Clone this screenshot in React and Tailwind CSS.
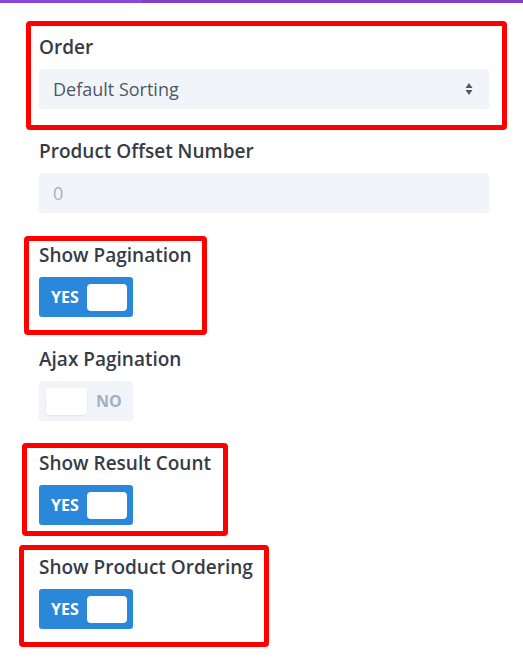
import React from 'react'

const font = { fontFamily: '"Open Sans", "Noto Sans", sans-serif' }

function Marked({ box, children }) {
  return (
    <div className="relative">
      {box && <div className={`pointer-events-none absolute rounded-[4px] border-[5px] border-[#ff0000] ${box}`} />}
      {children}
    </div>
  )
}

function Label({ children }) {
  return <div className="text-[19px] leading-[26px] font-semibold text-[#353c45]">{children}</div>
}

function Toggle({ on }) {
  if (on) {
    return (
      <div className="mt-[9px] flex h-10 w-[94px] items-center rounded-[3px] bg-[#2b87da] pl-3 pr-[6px]">
        <span className="text-[16px] font-bold text-white">YES</span>
        <div className="ml-auto h-[27px] w-10 rounded-[4px] bg-white" />
      </div>
    )
  }
  return (
    <div className="mt-[9px] flex h-10 w-[94px] items-center rounded-[3px] bg-[#f1f5f9] pl-[7px]">
      <div className="h-[27px] w-[41px] rounded-[4px] bg-white shadow-[0_1px_2px_rgba(0,0,0,0.08)]" />
      <span className="ml-[9px] text-[16px] font-bold text-[#a3b0c2]">NO</span>
    </div>
  )
}

export default function App() {
  return (
    <div className="min-h-[662px] w-[523px] bg-white" style={font}>
      <div className="flex h-[3px]">
        <div className="w-[142px] bg-[#8c46e0]" />
        <div className="flex-1 bg-[#8340c6]" />
      </div>
      <div className="flex flex-col gap-[29px] pl-[39px] pr-[34px] pt-[31px]">
        <Marked box="-left-[13px] -top-[13px] -right-[18px] -bottom-[21px]">
          <Label>Order</Label>
          <div className="mt-[9px] flex h-10 items-center rounded-[3px] bg-[#f1f5f9] pl-[14px] pr-4">
            <span className="text-[18px] text-[#4c5866]">Default Sorting</span>
            <svg className="ml-auto" width="8" height="14" viewBox="0 0 8 14">
              <path d="M4 1 L7.5 6 L0.5 6 Z" fill="#4c5866" />
              <path d="M4 13 L7.5 8 L0.5 8 Z" fill="#4c5866" />
            </svg>
          </div>
        </Marked>
        <Marked>
          <Label>Product Offset Number</Label>
          <div className="mt-[9px] flex h-10 items-center rounded-[3px] bg-[#f1f5f9] pl-[14px]">
            <span className="text-[18px] text-[#a3b0c2]">0</span>
          </div>
        </Marked>
        <Marked box="-left-[15px] -top-[6px] w-[183px] -bottom-[18px]">
          <Label>Show Pagination</Label>
          <Toggle on />
        </Marked>
        <Marked>
          <Label>Ajax Pagination</Label>
          <Toggle />
        </Marked>
        <Marked box="-left-[17px] -top-[7px] w-[206px] -bottom-[11px]">
          <Label>Show Result Count</Label>
          <Toggle on />
        </Marked>
        <Marked box="-left-5 -top-[9px] w-[250px] -bottom-[18px]">
          <Label>Show Product Ordering</Label>
          <Toggle on />
        </Marked>
      </div>
    </div>
  )
}
